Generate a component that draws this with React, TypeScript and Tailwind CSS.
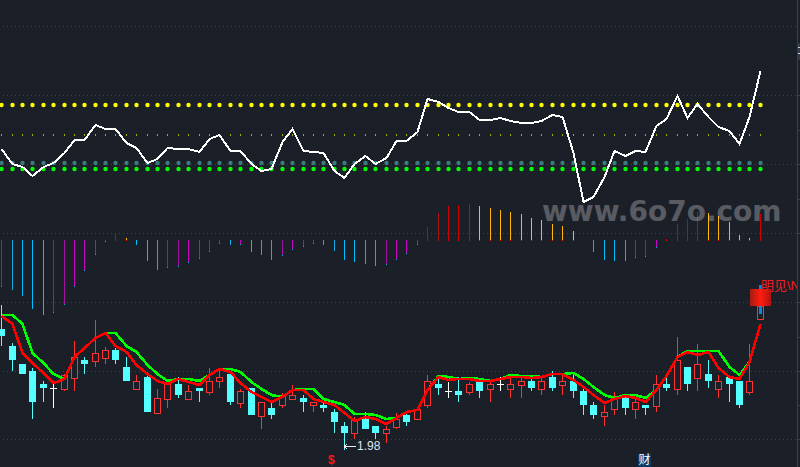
const BG = "#1b1f28";
const GRID_Y = [26, 95, 164, 233, 302, 371, 439];

function barX(i: number) {
  return Math.floor(1.7 + 10.39 * i);
}

function toPoints(values: number[]) {
  return values.map((y, i) => `${barX(i) + 0.5},${y}`).join(" ");
}

// oscillator line, one y per bar
const WHITE_LINE = [
  149, 164, 167, 176, 167, 163, 153, 140, 140, 125, 129, 129, 143, 148, 163, 159, 148, 149, 149, 152, 139, 135, 151, 151, 164, 171,
  169, 142, 129, 151, 152, 153, 171, 178, 164, 156, 164, 158, 141, 141, 132, 99, 102, 108, 112, 112, 120, 120, 118, 121, 123, 123,
  121, 115, 117, 153, 202, 197, 177, 151, 156, 151, 152, 126, 119, 96, 118, 104, 117, 127, 131, 144, 117, 71,
];

const RED_LINE = [
  316, 324, 353, 363, 373, 383, 379, 357, 348, 338, 333, 346, 352, 365, 374, 381, 384, 379, 382, 385, 375, 369, 372, 383, 392, 397,
  402, 397, 390, 390, 399, 402, 405, 413, 421, 417, 419, 424, 418, 412, 410, 390, 377, 380, 379, 379, 381, 381, 379, 377, 377, 378,
  377, 374, 374, 380, 387, 395, 403, 399, 396, 398, 402, 390, 376, 357, 352, 355, 352, 368, 377, 379, 362, 324,
];

const GREEN_LINE = [
  315, 315, 324, 353, 363, 374, 379, 357, 348, 338, 333, 333, 346, 352, 365, 374, 381, 379, 379, 381, 375, 369, 369, 372, 382, 389,
  395, 397, 390, 389, 389, 399, 402, 405, 414, 414, 415, 419, 418, 412, 410, 390, 376, 377, 379, 378, 379, 381, 379, 375, 376, 376,
  377, 374, 374, 373, 379, 387, 395, 398, 395, 395, 398, 390, 376, 357, 351, 351, 351, 351, 367, 375, 362,
];

// MACD bars: end y measured from the 240 baseline, and a colour key
const MACD: [number, string][] = [
  [287, "p"], [290, "b"], [296, "c"], [309, "c"], [315, "c"], [313, "p"], [305, "p"], [287, "m"], [271, "m"], [255, "m"], [242, "p"],
  [233, "d"], [238, "g"], [245, "c"], [261, "c"], [270, "b"], [268, "p"], [267, "p"], [263, "m"], [259, "m"], [252, "p"], [244, "p"],
  [245, "b"], [245, "m"], [252, "c"], [255, "b"], [260, "b"], [256, "p"], [250, "m"], [247, "m"], [244, "p"], [245, "b"], [251, "b"],
  [260, "c"], [262, "c"], [264, "b"], [266, "b"], [265, "p"], [260, "m"], [254, "m"], [245, "p"], [227, "d"], [213, "d"], [206, "r"],
  [205, "r"], [204, "d"], [206, "g"], [208, "g"], [210, "g"], [212, "g"], [214, "g"], [218, "g"], [220, "g"], [224, "g"], [226, "g"],
  [231, "g"], [240, "n"], [252, "b"], [260, "c"], [261, "c"], [261, "b"], [258, "p"], [257, "p"], [248, "m"], [239, "r"], [224, "d"],
  [219, "d"], [212, "d"], [213, "g"], [216, "g"], [222, "g"], [235, "g"], [238, "g"], [214, "r"],
];

const MACD_COLORS: Record<string, string> = {
  p: "#a012a0",
  m: "#c800c8",
  c: "#00bfff",
  b: "#14aee6",
  d: "#a81410",
  r: "#d00000",
  g: "#ffb80a",
};

// high, body top, body bottom, low, kind (c cyan filled, r red hollow, w white cross)
const CANDLES: [number, number, number, number, string][] = [
  [305, 329, 336, 346, "c"], [343, 346, 360, 371, "c"], [364, 364, 374, 374, "c"], [368, 371, 402, 419, "c"], [381, 384, 388, 402, "c"],
  [384, 388, 389, 408, "w"], [374, 375, 389, 391, "r"], [341, 357, 378, 391, "r"], [357, 360, 364, 374, "c"], [320, 353, 361, 367, "r"],
  [347, 350, 358, 364, "r"], [348, 350, 360, 364, "c"], [357, 367, 381, 381, "c"], [375, 381, 389, 389, "r"], [375, 377, 412, 412, "c"],
  [389, 398, 413, 413, "r"], [383, 383, 399, 408, "r"], [377, 384, 395, 398, "c"], [385, 391, 399, 399, "r"], [388, 388, 391, 402, "c"],
  [368, 381, 392, 395, "r"], [370, 377, 381, 388, "r"], [373, 374, 402, 405, "c"], [389, 391, 403, 408, "r"], [388, 388, 415, 415, "c"],
  [402, 402, 416, 429, "r"], [403, 408, 415, 419, "c"], [393, 395, 405, 408, "r"], [385, 395, 399, 399, "r"], [395, 398, 402, 412, "c"],
  [402, 402, 405, 412, "r"], [402, 405, 408, 412, "c"], [409, 412, 422, 433, "c"], [422, 426, 433, 450, "c"], [417, 420, 433, 439, "r"],
  [412, 419, 429, 429, "c"], [426, 426, 433, 439, "c"], [426, 429, 433, 443, "r"], [413, 419, 427, 429, "r"], [412, 415, 422, 426, "c"],
  [407, 409, 419, 420, "r"], [375, 381, 405, 408, "r"], [378, 384, 388, 395, "c"], [382, 391, 392, 398, "w"], [377, 391, 395, 402, "c"],
  [382, 384, 392, 395, "r"], [380, 382, 391, 398, "c"], [380, 384, 389, 402, "r"], [377, 384, 385, 391, "w"], [377, 384, 389, 398, "r"],
  [377, 381, 385, 398, "r"], [378, 381, 388, 391, "c"], [377, 381, 389, 395, "r"], [371, 377, 388, 391, "c"], [374, 381, 385, 395, "r"],
  [375, 381, 391, 398, "c"], [388, 391, 405, 415, "c"], [402, 405, 415, 419, "c"], [405, 412, 416, 426, "r"], [392, 398, 409, 415, "r"],
  [395, 398, 408, 415, "c"], [398, 402, 409, 419, "r"], [405, 405, 408, 415, "c"], [375, 384, 406, 412, "r"], [378, 384, 388, 391, "c"],
  [337, 360, 389, 395, "r"], [367, 367, 384, 391, "c"], [344, 364, 378, 391, "r"], [360, 374, 381, 388, "c"], [375, 381, 389, 398, "r"],
  [377, 377, 384, 402, "c"], [381, 381, 405, 408, "c"], [344, 381, 392, 395, "r"],
];

function Candle({ index, candle }: { index: number; candle: [number, number, number, number, string] }) {
  const [high, top, bottom, low, kind] = candle;
  const x = barX(index);
  const color = kind === "c" ? "#54ffff" : kind === "w" ? "#ffffff" : "#ff3232";

  if (kind === "r") {
    return (
      <g>
        <rect x={x} y={high} width={1} height={top - high} fill={color} />
        <rect x={x} y={bottom} width={1} height={low - bottom} fill={color} />
        <rect x={x - 2.5} y={top + 0.5} width={6} height={bottom - top} fill={BG} stroke={color} />
      </g>
    );
  }
  return (
    <g>
      <rect x={x} y={high} width={1} height={low - high} fill={color} />
      <rect x={x - 3} y={top} width={7} height={Math.max(bottom - top, 1)} fill={color} />
    </g>
  );
}

function MacdBar({ index, end, kind }: { index: number; end: number; kind: string }) {
  if (kind === "n") return null;
  const x = barX(index);
  const base = 240;
  if (end < base) {
    const tip = kind === "g" ? "#f01000" : MACD_COLORS[kind];
    return (
      <g>
        <rect x={x} y={end} width={1} height={base - end} fill={MACD_COLORS[kind]} />
        <rect x={x} y={base} width={1} height={1} fill={tip} />
      </g>
    );
  }
  const hasTip = kind === "p" || kind === "m";
  return (
    <g>
      <rect x={x} y={base} width={1} height={end - base} fill={MACD_COLORS[kind]} />
      {hasTip ? <rect x={x} y={end - 1} width={1} height={1} fill="#00b4c8" /> : null}
    </g>
  );
}

function ChartLayer() {
  const bars = WHITE_LINE.map((_, i) => i);
  return (
    <svg viewBox="0 0 800 467" shapeRendering="crispEdges" className="block h-[467px] w-[800px]">
      {GRID_Y.map((y) => (
        <line key={y} x1={3} x2={797} y1={y + 0.5} y2={y + 0.5} stroke="#3c4049" strokeDasharray="1 3" />
      ))}

      {/* right axis */}
      <rect x={797} y={0} width={1} height={467} fill="#3b404c" />
      <rect x={797} y={43} width={3} height={17} fill="#343a4a" />
      <rect x={798} y={47} width={2} height={1} fill="#c8d4f0" />
      <rect x={798} y={53} width={2} height={1} fill="#c8d4f0" />
      {[95, 130, 164, 199, 233, 302, 337, 371, 405, 439].map((y) => (
        <rect key={y} x={798} y={y} width={2} height={1} fill="#3b404c" />
      ))}

      {/* dotted levels */}
      <g shapeRendering="auto">
        {bars.map((i) => (
          <g key={i}>
            <circle cx={barX(i) + 0.5} cy={105} r={2.2} fill="#ffff00" />
            <circle cx={barX(i) + 0.5} cy={163} r={2.2} fill="#3c7a7c" />
            <circle cx={barX(i) + 0.5} cy={169} r={2.2} fill="#00ff00" />
          </g>
        ))}
      </g>
      {bars.map((i) => (
        <rect key={i} x={barX(i)} y={134} width={1} height={2} fill="#a0b000" />
      ))}

      <polyline points={toPoints(WHITE_LINE)} fill="none" stroke="#ffffff" strokeWidth={2} />

      {MACD.map(([end, kind], i) => (
        <MacdBar key={i} index={i} end={end} kind={kind} />
      ))}

      {CANDLES.map((candle, i) => (
        <Candle key={i} index={i} candle={candle} />
      ))}

      {/* last bar, still open */}
      <rect x={759} y={285} width={3} height={4} fill="#0a84e8" />
      <rect x={757.5} y={306.5} width={6} height={13} fill={BG} stroke="#ff3232" />
      <rect x={759} y={306} width={3} height={8} fill="#0a84e8" />

      <polyline points={toPoints(GREEN_LINE)} fill="none" stroke="#00ff00" strokeWidth={2.6} />
      <polyline points={toPoints(RED_LINE)} fill="none" stroke="#ff0000" strokeWidth={2.6} />

      {/* low-price marker arrow */}
      <path d="M344 446.5H356M344 446.5L347 444M344 446.5L347 449" fill="none" stroke="#e8edf5" />
    </svg>
  );
}

export default function App() {
  return (
    <div
      className="relative h-[467px] w-[800px] overflow-hidden bg-[#1b1f28]"
      style={{ fontFamily: '"Liberation Sans", "Noto Sans CJK SC", sans-serif' }}
    >
      <ChartLayer />

      <span className="absolute left-[542px] top-[194px] text-[28px] font-bold leading-[36px] whitespace-nowrap text-white/27 [font-family:'DejaVu_Sans',sans-serif]">
        www.6o7o.com
      </span>

      <div className="absolute left-[750px] top-[289px] h-[17px] w-[21px] bg-linear-to-r from-[#a81a10] via-[#ff1c10] to-[#b01410]" />
      <span className="absolute left-[761px] top-[278px] w-[36px] overflow-hidden text-[13px] leading-[16px] whitespace-nowrap text-[#f02020]">
        明见\N
      </span>

      <span className="absolute left-[357px] top-[439px] text-[12px] leading-[14px] whitespace-nowrap text-[#dfe6f0]">
        1.98
      </span>
      <span className="absolute left-[328px] top-[453px] text-[12px] font-bold leading-[14px] text-[#ff1414]">$</span>
      <span className="absolute left-[638px] top-[454px] h-[13px] w-[13px] bg-[#0a3a66] text-center text-[12px] leading-[13px] text-white">
        财
      </span>
    </div>
  );
}
